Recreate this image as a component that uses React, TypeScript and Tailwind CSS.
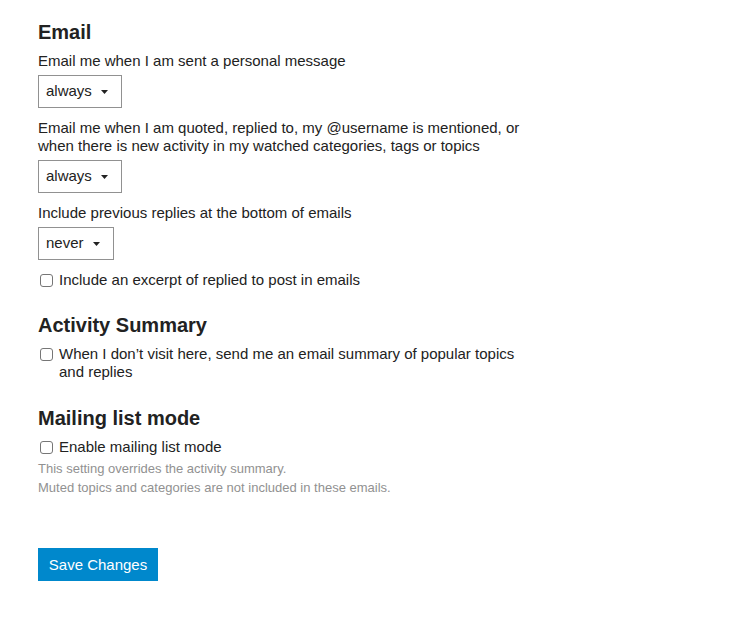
import React from "react";

const font = { fontFamily: '"Liberation Sans", Arial, Helvetica, sans-serif' };

function Select({ value }: { value: string }) {
  return (
    <div className="inline-flex items-center h-[33px] border border-[#919191] bg-white pl-[7px] pr-[13px] text-[15px] text-[#222]">
      <span>{value}</span>
      <svg className="ml-[9px]" width="7" height="4" viewBox="0 0 7 4">
        <path d="M0 0 L7 0 L3.5 4 Z" fill="#222" />
      </svg>
    </div>
  );
}

function Check({ children }: { children: React.ReactNode }) {
  return (
    <div className="flex items-start text-[15px] leading-[18px] text-[#222] max-w-[490px]">
      <span className="mt-[3px] ml-[2px] mr-[6px] w-[13px] h-[13px] shrink-0 rounded-[3px] border border-[#767676] bg-white" />
      <span>{children}</span>
    </div>
  );
}

export default function App() {
  return (
    <div className="min-h-[617px] w-[731px] bg-white" style={font}>
      <div className="px-[38px] pt-[20px] flex flex-col">
        <h2 className="text-[20px] leading-[24px] font-bold text-[#222]">Email</h2>
        <div className="mt-[8px] text-[15px] leading-[18px] text-[#222]">
          Email me when I am sent a personal message
        </div>
        <div className="mt-[5px]">
          <Select value="always" />
        </div>
        <div className="mt-[11px] text-[15px] leading-[18px] text-[#222] max-w-[490px]">
          Email me when I am quoted, replied to, my @username is mentioned, or when there is new activity in my watched categories, tags or topics
        </div>
        <div className="mt-[5px]">
          <Select value="always" />
        </div>
        <div className="mt-[11px] text-[15px] leading-[18px] text-[#222]">
          Include previous replies at the bottom of emails
        </div>
        <div className="mt-[5px]">
          <Select value="never" />
        </div>
        <div className="mt-[11px]">
          <Check>Include an excerpt of replied to post in emails</Check>
        </div>

        <h2 className="mt-[24px] text-[20px] leading-[24px] font-bold text-[#222]">Activity Summary</h2>
        <div className="mt-[8px]">
          <Check>When I don’t visit here, send me an email summary of popular topics and replies</Check>
        </div>

        <h2 className="mt-[25px] text-[20px] leading-[24px] font-bold text-[#222]">Mailing list mode</h2>
        <div className="mt-[8px]">
          <Check>Enable mailing list mode</Check>
        </div>
        <div className="mt-[3px] text-[13px] leading-[19px] text-[#919191]">
          <div>This setting overrides the activity summary.</div>
          <div>Muted topics and categories are not included in these emails.</div>
        </div>

        <div className="mt-[51px]">
          <button className="h-[33px] w-[120px] bg-[#0088cc] text-white text-[15px] leading-[33px] text-center">
            Save Changes
          </button>
        </div>
      </div>
    </div>
  );
}
